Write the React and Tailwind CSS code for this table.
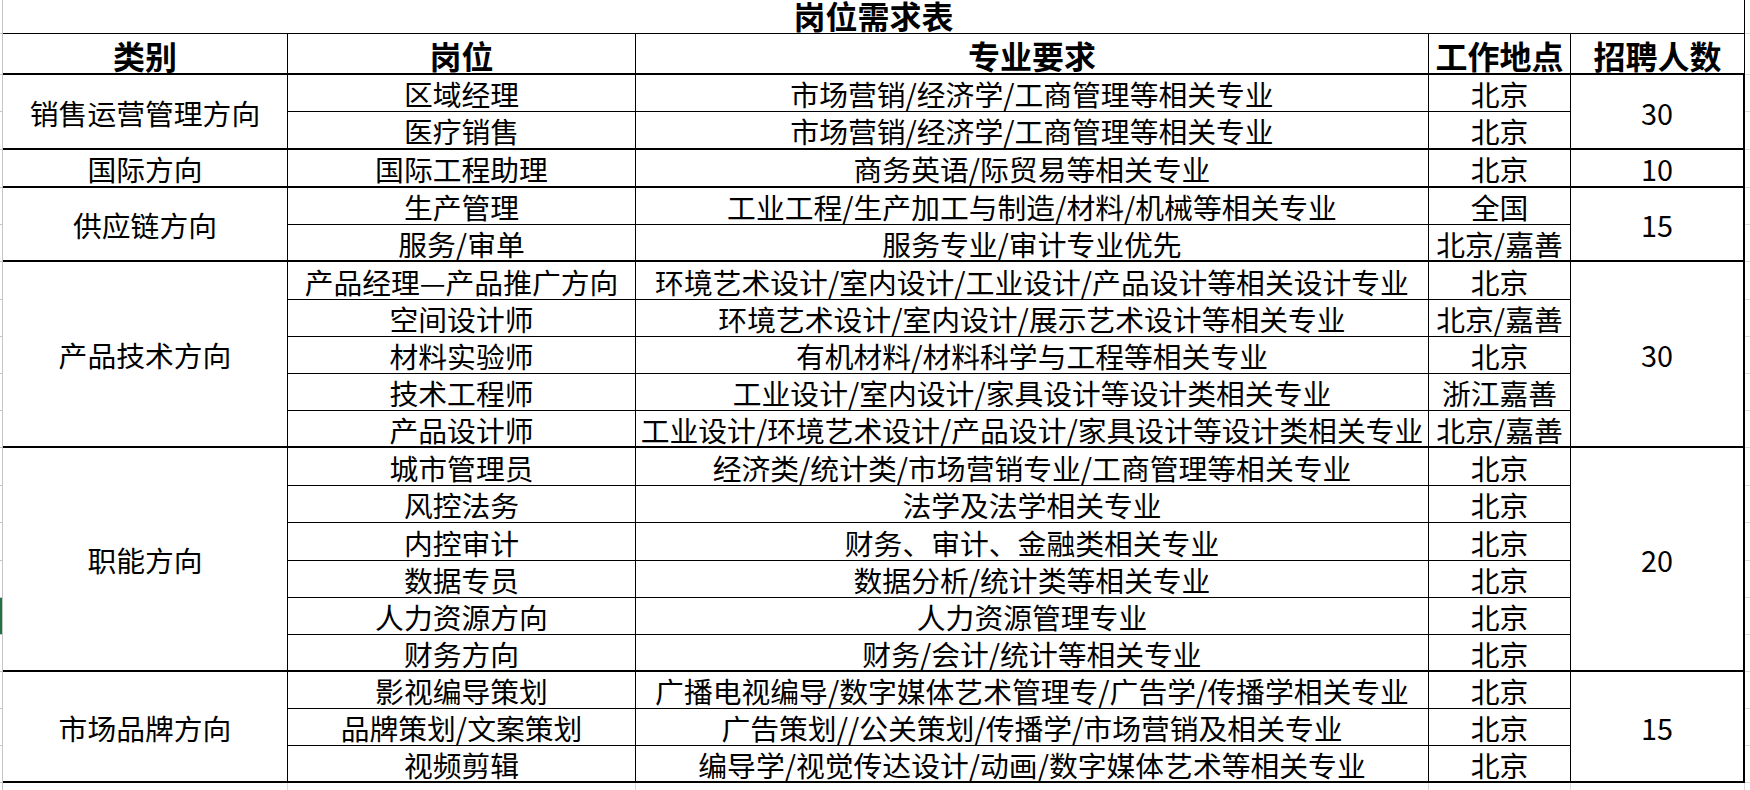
import React from "react";

const groups = [
	{
		cat: "销售运营管理方向",
		count: 30,
		rows: [
			["区域经理", "市场营销/经济学/工商管理等相关专业", "北京"],
			["医疗销售", "市场营销/经济学/工商管理等相关专业", "北京"],
		],
	},
	{
		cat: "国际方向",
		count: 10,
		rows: [["国际工程助理", "商务英语/际贸易等相关专业", "北京"]],
	},
	{
		cat: "供应链方向",
		count: 15,
		rows: [
			["生产管理", "工业工程/生产加工与制造/材料/机械等相关专业", "全国"],
			["服务/审单", "服务专业/审计专业优先", "北京/嘉善"],
		],
	},
	{
		cat: "产品技术方向",
		count: 30,
		rows: [
			["产品经理—产品推广方向", "环境艺术设计/室内设计/工业设计/产品设计等相关设计专业", "北京"],
			["空间设计师", "环境艺术设计/室内设计/展示艺术设计等相关专业", "北京/嘉善"],
			["材料实验师", "有机材料/材料科学与工程等相关专业", "北京"],
			["技术工程师", "工业设计/室内设计/家具设计等设计类相关专业", "浙江嘉善"],
			["产品设计师", "工业设计/环境艺术设计/产品设计/家具设计等设计类相关专业", "北京/嘉善"],
		],
	},
	{
		cat: "职能方向",
		count: 20,
		rows: [
			["城市管理员", "经济类/统计类/市场营销专业/工商管理等相关专业", "北京"],
			["风控法务", "法学及法学相关专业", "北京"],
			["内控审计", "财务、审计、金融类相关专业", "北京"],
			["数据专员", "数据分析/统计类等相关专业", "北京"],
			["人力资源方向", "人力资源管理专业", "北京"],
			["财务方向", "财务/会计/统计等相关专业", "北京"],
		],
	},
	{
		cat: "市场品牌方向",
		count: 15,
		rows: [
			["影视编导策划", "广播电视编导/数字媒体艺术管理专/广告学/传播学相关专业", "北京"],
			["品牌策划/文案策划", "广告策划//公关策划/传播学/市场营销及相关专业", "北京"],
			["视频剪辑", "编导学/视觉传达设计/动画/数字媒体艺术等相关专业", "北京"],
		],
	},
];

const spanClass = {
	1: "row-span-1",
	2: "row-span-2",
	3: "row-span-3",
	5: "row-span-5",
	6: "row-span-6",
};

// row header remnant on the far left (gray ticks, green = selected row)
const Strip = ({ active, last }) => (
	<div
		className={`border-r border-[#c6c6c6] ${last ? "" : "border-b"} ${
			active ? "bg-[#217346]" : "bg-white"
		}`}
	/>
);

// gridline ticks to the right of the table
const Tail = () => <div className="border-b border-[#dadada]" />;

const Cell = ({ children, thick, className = "" }) => (
	<div
		className={`flex items-center justify-center whitespace-nowrap border-r border-black ${
			thick ? "border-b-2" : "border-b"
		} ${className}`}
	>
		<span className="leading-none pt-[3px]">{children}</span>
	</div>
);

const App = () => {
	const cells = [];
	let n = 0;

	// title row
	cells.push(<Strip key="s-title" />);
	cells.push(
		<div
			key="title"
			className="col-span-5 flex items-end justify-center border-r border-b border-black pb-[2px]"
		>
			<span className="leading-none font-bold text-[32px]">岗位需求表</span>
		</div>
	);
	cells.push(<Tail key="t-title" />);

	// header row
	cells.push(<Strip key="s-head" />);
	["类别", "岗位", "专业要求", "工作地点", "招聘人数"].forEach((h) => {
		cells.push(
			<div
				key={h}
				className="flex items-end justify-center whitespace-nowrap border-r border-b-2 border-black pb-[2px]"
			>
				<span className="leading-none font-bold text-[32px]">{h}</span>
			</div>
		);
	});
	cells.push(<Tail key="t-head" />);

	groups.forEach((g, gi) => {
		g.rows.forEach((r, i) => {
			const lastRow = i === g.rows.length - 1;
			cells.push(<Strip key={`s-${n}`} active={n === 14} />);
			if (i === 0) {
				cells.push(
					<Cell key={`cat-${gi}`} thick className={spanClass[g.rows.length]}>
						{g.cat}
					</Cell>
				);
			}
			cells.push(
				<Cell key={`pos-${n}`} thick={lastRow}>
					{r[0]}
				</Cell>
			);
			cells.push(
				<Cell key={`maj-${n}`} thick={lastRow}>
					{r[1]}
				</Cell>
			);
			cells.push(
				<Cell key={`loc-${n}`} thick={lastRow}>
					{r[2]}
				</Cell>
			);
			if (i === 0) {
				cells.push(
					<Cell
						key={`cnt-${gi}`}
						thick
						className={`border-r-2 ${spanClass[g.rows.length]}`}
					>
						{g.count}
					</Cell>
				);
			}
			cells.push(<Tail key={`t-${n}`} />);
			n++;
		});
	});

	// empty sliver of the next sheet row
	cells.push(<Strip key="s-end" last />);
	[0, 1, 2, 3, 4].forEach((k) => {
		cells.push(<div key={`e-${k}`} className="border-r border-[#dadada]" />);
	});
	cells.push(<div key="t-end" />);

	return (
		<div className="w-[1750px] h-[790px] overflow-hidden bg-white text-black font-[family-name:'Noto_Sans_CJK_SC','Liberation_Sans',sans-serif] text-[28.8px]">
			<div className="grid h-full grid-cols-[3px_285px_348px_793px_142px_174px_1fr] grid-rows-[34px_41px_37px_38px_38px_37px_37px_38px_37px_37px_37px_37px_38px_37px_38px_37px_37px_37px_37px_37px_37px_7px]">
				{cells}
			</div>
		</div>
	);
};

export default App;
